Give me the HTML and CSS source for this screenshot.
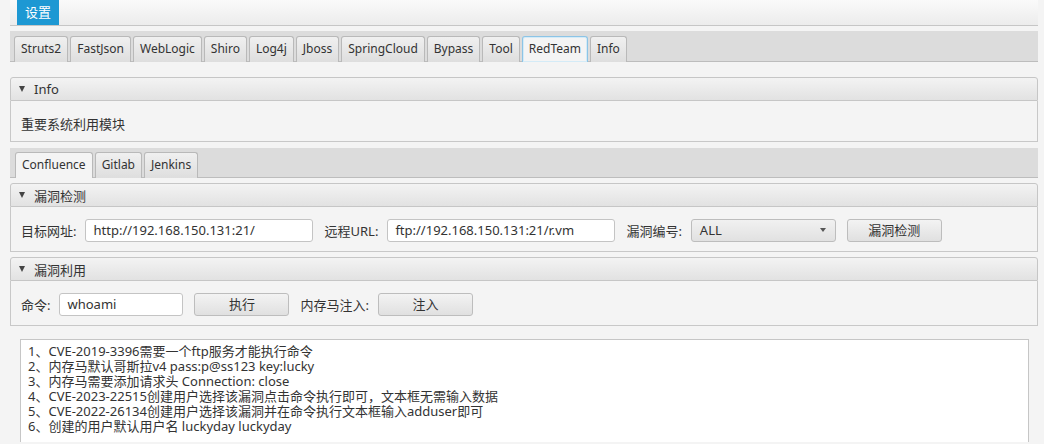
FILE: index.html
```html
<!DOCTYPE html>
<html lang="zh-CN">
<head>
  <meta charset="UTF-8">
  <title>RedTeam</title>
  <link rel="stylesheet" href="styles.css">
</head>
<body>
<div class="app">
  <div class="menubar">
    <div class="menu-item">设置</div>
  </div>

  <div class="tab-header">
    <div class="tab">Struts2</div>
    <div class="tab">FastJson</div>
    <div class="tab">WebLogic</div>
    <div class="tab">Shiro</div>
    <div class="tab">Log4j</div>
    <div class="tab">Jboss</div>
    <div class="tab">SpringCloud</div>
    <div class="tab">Bypass</div>
    <div class="tab">Tool</div>
    <div class="tab active focused">RedTeam</div>
    <div class="tab">Info</div>
  </div>

  <div class="tab-content">
    <div class="titled-pane">
      <div class="pane-title"><span class="arrow"></span>Info</div>
      <div class="pane-body info-body">重要系统利用模块</div>
    </div>

    <div class="tab-header sub">
      <div class="tab active">Confluence</div>
      <div class="tab">Gitlab</div>
      <div class="tab">Jenkins</div>
    </div>

    <div class="titled-pane">
      <div class="pane-title"><span class="arrow"></span>漏洞检测</div>
      <div class="pane-body row">
        <label class="lbl">目标网址:</label>
        <div class="field w-url">http://192.168.150.131:21/</div>
        <label class="lbl gap">远程URL:</label>
        <div class="field w-url">ftp://192.168.150.131:21/r.vm</div>
        <label class="lbl gap">漏洞编号:</label>
        <div class="combo"><span>ALL</span><span class="combo-arrow"></span></div>
        <div class="btn gap">漏洞检测</div>
      </div>
    </div>

    <div class="titled-pane">
      <div class="pane-title"><span class="arrow"></span>漏洞利用</div>
      <div class="pane-body row">
        <label class="lbl">命令:</label>
        <div class="field w-cmd">whoami</div>
        <div class="btn gap">执行</div>
        <label class="lbl gap">内存马注入:</label>
        <div class="btn">注入</div>
      </div>
    </div>

    <div class="output">
      <div>1、CVE-2019-3396需要一个ftp服务才能执行命令</div>
      <div>2、内存马默认哥斯拉v4 pass:p@ss123 key:lucky</div>
      <div>3、内存马需要添加请求头 Connection: close</div>
      <div>4、CVE-2023-22515创建用户选择该漏洞点击命令执行即可，文本框无需输入数据</div>
      <div>5、CVE-2022-26134创建用户选择该漏洞并在命令执行文本框输入adduser即可</div>
      <div>6、创建的用户默认用户名 luckyday luckyday</div>
    </div>
  </div>
</div>
</body>
</html>
```

FILE: styles.css
```css
body {
  margin: 0;
  background-color: #f4f4f4;
  color: #333333;
  font-family: 'Noto Sans', 'Noto Sans CJK SC', sans-serif;
  font-size: 13px;
  height: 444px;
  overflow: hidden;
}

.app {
  padding: 0 6px 0 10px;
}

/* 菜单栏 */
.menubar {
  display: flex;
  height: 25px;
  padding-left: 7px;
  border-bottom: 1px solid #c6c6c6;
  background: linear-gradient(#fafafa, #ececec);
}

.menu-item {
  width: 42px;
  text-align: center;
  line-height: 25px;
  background-color: #1d98d3;
  color: #ffffff;
}

/* 选项卡 */
.tab-header {
  display: flex;
  align-items: flex-end;
  gap: 2px;
  height: 30px;
  margin-top: 5px;
  padding-left: 4px;
  background-color: #dcdcdc;
  border-bottom: 1px solid #bdbdbd;
}

.tab-header.sub {
  height: 29px;
  margin-top: 6px;
  padding-left: 5px;
}

.tab {
  height: 25px;
  line-height: 24px;
  padding: 0 6px;
  font-size: 12px;
  border: 1px solid #b9b9b9;
  border-bottom: none;
  border-radius: 3px 3px 0 0;
  background: linear-gradient(#f0f0f0, #dedede);
  margin-bottom: -1px;
}

.tab.active {
  background: #f4f4f4;
}

.tab.focused {
  border-color: #8cc4e6;
  box-shadow: inset 0 0 0 1px #d4ebf7;
}

.tab-content {
  padding-top: 15px;
}

/* 折叠面板 */
.titled-pane + .titled-pane,
.tab-header.sub + .titled-pane {
  margin-top: 5px;
}

.pane-title {
  display: flex;
  align-items: center;
  height: 22px;
  padding-left: 8px;
  border: 1px solid #c6c6c6;
  border-radius: 3px 3px 0 0;
  background: linear-gradient(#f3f3f3, #e2e2e2);
}

.arrow {
  width: 0;
  height: 0;
  margin-right: 9px;
  border-left: 3.5px solid transparent;
  border-right: 3.5px solid transparent;
  border-top: 6px solid #444;
}

.pane-body {
  border: 1px solid #c8c8c8;
  border-top: none;
  background-color: #f4f4f4;
  padding: 0 10px;
}

.info-body {
  height: 40px;
  line-height: 46px;
}

.row {
  display: flex;
  align-items: center;
  height: 42px;
  padding-top: 2px;
}

.lbl {
  margin-right: 9px;
}

.gap {
  margin-left: 11px;
}

.field {
  box-sizing: border-box;
  height: 23px;
  line-height: 21px;
  padding: 0 7px;
  border: 1px solid #c4c4c4;
  border-radius: 3px;
  background-color: #ffffff;
}

.w-url {
  width: 228px;
}

.w-cmd {
  width: 124px;
}

.combo {
  box-sizing: border-box;
  display: flex;
  align-items: center;
  justify-content: space-between;
  width: 145px;
  height: 23px;
  padding: 0 9px 0 8px;
  border: 1px solid #bdbdbd;
  border-radius: 3px;
  background: linear-gradient(#f1f1f1, #e1e1e1);
}

.combo-arrow {
  width: 0;
  height: 0;
  border-left: 3px solid transparent;
  border-right: 3px solid transparent;
  border-top: 4px solid #555;
}

.btn {
  box-sizing: border-box;
  width: 95px;
  height: 23px;
  line-height: 21px;
  text-align: center;
  border: 1px solid #bdbdbd;
  border-radius: 3px;
  background: linear-gradient(#f3f3f3, #e0e0e0);
}

/* 输出框 */
.output {
  height: 94px;
  margin: 13px 9px 0 10px;
  padding: 4px 7px;
  border: 1px solid #c6c6c6;
  border-bottom: none;
  background-color: #ffffff;
  line-height: 15px;
  overflow: hidden;
}
```
